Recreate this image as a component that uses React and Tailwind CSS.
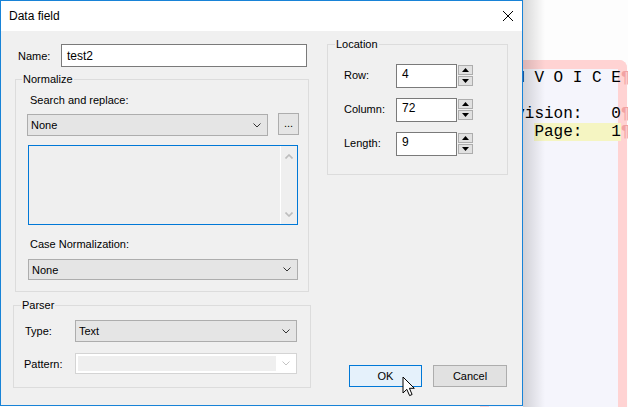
import React from 'react'

const UI = "font-['Liberation_Sans',Arial,sans-serif] text-[11px] leading-[14px] text-black"

function Chevron({ color = '#333' }) {
  return (
    <svg width="8" height="5" viewBox="0 0 8 5">
      <path d="M0.5 0.5 L4 4 L7.5 0.5" stroke={color} fill="none" strokeWidth="1" />
    </svg>
  )
}

function Combo({ value, w, h, x = 'pl-[3px]' }) {
  return (
    <div
      className={`flex items-center justify-between border border-[#adadad] bg-[#e5e5e5] pr-[6px] ${x} ${w} ${h}`}
    >
      <span>{value}</span>
      <Chevron />
    </div>
  )
}

function GroupBox({ title, className, legendX, children }) {
  return (
    <div className={`relative border border-[#dcdcdc] ${className}`}>
      <span className={`absolute top-[-8px] bg-[#f0f0f0] px-[1px] ${legendX}`}>{title}</span>
      {children}
    </div>
  )
}

function Spin() {
  return (
    <div className="ml-[1px] flex flex-col gap-[1px] pt-[1px]">
      <div className="flex h-[10px] w-[15px] items-center justify-center border border-[#adadad] bg-[#e1e1e1]">
        <svg width="7" height="4" viewBox="0 0 7 4">
          <path d="M3.5 0 L7 4 L0 4 Z" fill="#000" />
        </svg>
      </div>
      <div className="flex h-[10px] w-[15px] items-center justify-center border border-[#adadad] bg-[#e1e1e1]">
        <svg width="7" height="4" viewBox="0 0 7 4">
          <path d="M0 0 L7 0 L3.5 4 Z" fill="#000" />
        </svg>
      </div>
    </div>
  )
}

function NumberRow({ label, value, first }) {
  return (
    <div className={`flex items-start ${first ? 'mt-[19px]' : 'mt-[10px]'}`}>
      <span className="ml-[16px] w-[52px] pt-[4px]">{label}</span>
      <div className="h-[24px] w-[61px] border border-[#7a7a7a] bg-white pl-[5px] pt-[2px] text-[12px]">
        {value}
      </div>
      <Spin />
    </div>
  )
}

function Cursor() {
  return (
    <svg className="absolute left-[401px] top-[375px]" width="14" height="21" viewBox="0 0 14 21">
      <path
        d="M1 1 L1 17 L4.8 13.3 L7.6 19.6 L10.1 18.5 L7.4 12.3 L12.3 12.3 Z"
        fill="#fff"
        stroke="#000"
        strokeWidth="1"
        strokeLinejoin="miter"
      />
    </svg>
  )
}

function Dialog() {
  return (
    <div className={`relative z-10 flex h-[406px] w-[523px] shrink-0 flex-col border border-[#1883d7] bg-[#f0f0f0] ${UI}`}>
      {/* title bar */}
      <div className="flex h-[30px] items-center justify-between bg-white pl-[8px] pr-[9px]">
        <span className="text-[12px]">Data field</span>
        <svg width="10" height="10" viewBox="0 0 10 10">
          <path d="M0 0 L10 10 M10 0 L0 10" stroke="#000" strokeWidth="1" />
        </svg>
      </div>

      <div className="flex pt-[13px]">
        {/* left column */}
        <div className="ml-[12px] flex w-[298px] flex-col">
          <div className="flex h-[23px] items-center">
            <span className="ml-[5px] w-[43px]">Name:</span>
            <div className="flex h-[23px] w-[246px] items-center border border-[#7a7a7a] bg-white pl-[5px] text-[12px]">
              test2
            </div>
          </div>

          <GroupBox title="Normalize" legendX="left-[6px]" className="ml-[2px] mt-[12px] h-[213px] w-[294px]">
            <div className="ml-[14px] mt-[13px]">Search and replace:</div>
            <div className="ml-[11px] mt-[7px] flex items-start">
              <Combo value="None" w="w-[241px]" h="h-[22px]" />
              <div className="-mt-[1px] ml-[10px] flex h-[22px] w-[21px] items-center justify-center border border-[#adadad] bg-[#e5e5e5] pb-[3px]">
                ...
              </div>
            </div>
            <div className="ml-[12px] mt-[9px] flex h-[80px] w-[270px] border border-[#0078d7] bg-[#efefef]">
              <div className="flex-1" />
              <div className="flex w-[17px] flex-col items-center justify-between border-l border-white pb-[7px] pt-[8px]">
                <svg width="8" height="5" viewBox="0 0 8 5">
                  <path d="M0.5 4.5 L4 1 L7.5 4.5" stroke="#bdbdbd" fill="none" strokeWidth="1.6" />
                </svg>
                <svg width="8" height="5" viewBox="0 0 8 5">
                  <path d="M0.5 0.5 L4 4 L7.5 0.5" stroke="#bdbdbd" fill="none" strokeWidth="1.6" />
                </svg>
              </div>
            </div>
            <div className="ml-[14px] mt-[12px]">Case Normalization:</div>
            <div className="ml-[12px] mt-[8px]">
              <Combo value="None" w="w-[270px]" h="h-[21px]" />
            </div>
          </GroupBox>

          <GroupBox title="Parser" legendX="left-[7px]" className="mt-[13px] h-[83px] w-[298px]">
            <div className="mt-[14px] flex items-center">
              <span className="ml-[11px] w-[50px]">Type:</span>
              <Combo value="Text" w="w-[222px]" h="h-[22px]" />
            </div>
            <div className="mt-[11px] flex items-center">
              <span className="ml-[10px] w-[51px]">Pattern:</span>
              <div className="flex h-[21px] w-[222px] items-center justify-between border border-[#d4d4d4] bg-white pl-[2px] pr-[6px]">
                <div className="h-[15px] w-[198px] bg-[#efefef]" />
                <Chevron color="#c4c4c4" />
              </div>
            </div>
          </GroupBox>
        </div>

        {/* right column */}
        <div className="ml-[16px] flex w-[181px] flex-col">
          <GroupBox title="Location" legendX="left-[7px]" className="h-[131px] w-[181px]">
            <NumberRow label="Row:" value="4" first />
            <NumberRow label="Column:" value="72" />
            <NumberRow label="Length:" value="9" />
          </GroupBox>

          <div className="ml-[22px] mt-[190px] flex gap-[11px]">
            <div className="flex h-[22px] w-[73px] items-center justify-center border border-[#0078d7] bg-[#e5f1fb]">
              OK
            </div>
            <div className="flex h-[22px] w-[74px] items-center justify-center border border-[#adadad] bg-[#e1e1e1]">
              Cancel
            </div>
          </div>
        </div>
      </div>

      <Cursor />
    </div>
  )
}

function Editor() {
  const mark = <span className="text-[#f2a3a3]">¶</span>
  return (
    <div className="relative flex-1">
      <div className="ml-[-43px] mt-[60px] h-[360px] w-[147px] rounded-tr-[8px] border-[9px] border-b-0 border-[#ffd3d3] bg-[#f5f5fc] pl-[7px] font-['Liberation_Mono','Courier_New',monospace] text-[16px] leading-[18px] whitespace-pre text-black">
        <div>I N V O I C E{mark}</div>
        <div>&nbsp;</div>
        <div>Revision:   0{mark}</div>
        <div>
          {'    '}
          <span className="bg-[#f5f5c2]">Page:   1</span>
          {mark}
        </div>
      </div>
      <div className="absolute inset-y-0 left-0 w-[22px] bg-gradient-to-r from-black/15 to-transparent" />
    </div>
  )
}

export default function App() {
  return (
    <div className="flex h-[407px] w-[628px] overflow-hidden bg-[#fdfdfd]">
      <Dialog />
      <Editor />
    </div>
  )
}
